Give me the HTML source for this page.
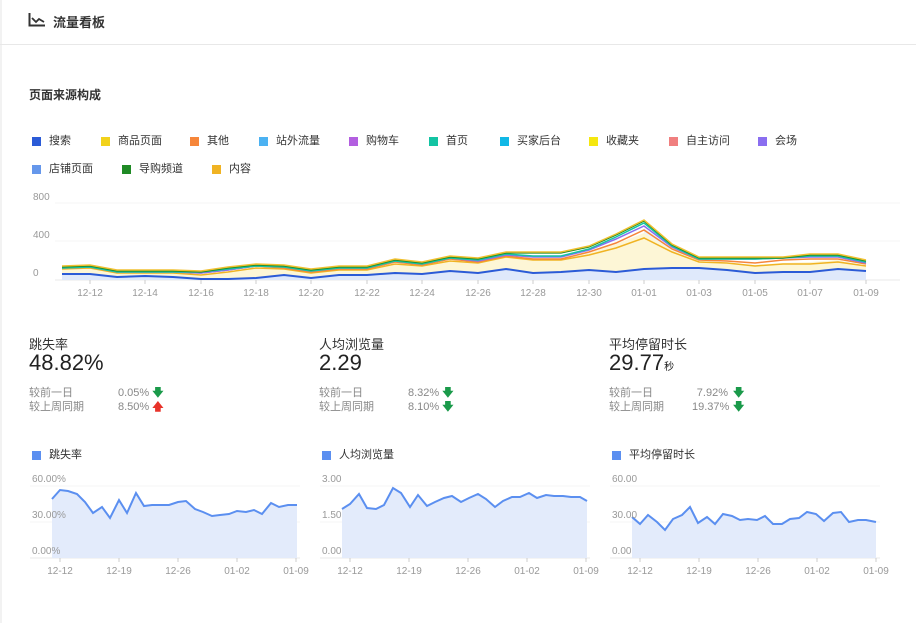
<!DOCTYPE html>
<html><head><meta charset="utf-8">
<style>
*{margin:0;padding:0;box-sizing:border-box}
body{width:916px;height:623px;background:#fff;font-family:"Liberation Sans","Noto Sans CJK SC",sans-serif;position:relative;overflow:hidden;color:#333}
.a{position:absolute;white-space:nowrap}
.hdr{position:absolute;left:0;top:0;width:916px;height:45px;border-bottom:1px solid #e8e8e8}
.lg{position:absolute;font-size:11px;color:#333;line-height:12px;white-space:nowrap;width:100px;height:14px}
.lg i{position:absolute;left:0;top:2px;width:9px;height:9px}
.lg span{position:absolute;left:17px;top:0;white-space:nowrap}
.t1{font-size:13px;color:#333}
.big{font-size:22px;color:#222}
.cmp{font-size:11px;color:#888;line-height:14px}
.ax{font-size:10px;fill:#999;font-family:"Liberation Sans",sans-serif}
</style></head><body>
<div style="position:absolute;left:0;top:0;width:2px;height:623px;background:#f2f2f2"></div>
<div class="hdr"></div>
<svg class="a" style="left:28px;top:13px" width="18" height="14" viewBox="0 0 18 14"><path d="M1.5 0V12.5H17" stroke="#333" stroke-width="2" fill="none"/><path d="M4 5L8 9L11 6L16 9" stroke="#333" stroke-width="1.8" fill="none"/></svg>
<div class="a" style="left:53px;top:12px;font-size:13px;font-weight:bold;color:#333">流量看板</div>
<div class="a" style="left:29px;top:86px;font-size:12px;font-weight:bold;color:#333">页面来源构成</div>

<div class="lg" style="left:32px;top:135px"><i style="background:#2b5bd7"></i><span>搜索</span></div>
<div class="lg" style="left:101px;top:135px"><i style="background:#f2d21b"></i><span>商品页面</span></div>
<div class="lg" style="left:190px;top:135px"><i style="background:#f6863a"></i><span>其他</span></div>
<div class="lg" style="left:259px;top:135px"><i style="background:#4cb2f2"></i><span>站外流量</span></div>
<div class="lg" style="left:349px;top:135px"><i style="background:#b35fe0"></i><span>购物车</span></div>
<div class="lg" style="left:429px;top:135px"><i style="background:#13c4a3"></i><span>首页</span></div>
<div class="lg" style="left:500px;top:135px"><i style="background:#11b8e6"></i><span>买家后台</span></div>
<div class="lg" style="left:589px;top:135px"><i style="background:#f5e70f"></i><span>收藏夹</span></div>
<div class="lg" style="left:669px;top:135px"><i style="background:#f07f7f"></i><span>自主访问</span></div>
<div class="lg" style="left:758px;top:135px"><i style="background:#8a6ef0"></i><span>会场</span></div>
<div class="lg" style="left:32px;top:163px"><i style="background:#6597eb"></i><span>店铺页面</span></div>
<div class="lg" style="left:122px;top:163px"><i style="background:#1f8a25"></i><span>导购频道</span></div>
<div class="lg" style="left:212px;top:163px"><i style="background:#f0b323"></i><span>内容</span></div>

<svg class="a" style="left:0;top:185px" width="916" height="120" viewBox="0 185 916 120">
<line x1="55" y1="203" x2="900" y2="203" stroke="#f4f4f4"/>
<line x1="55" y1="241" x2="900" y2="241" stroke="#f4f4f4"/>
<line x1="55" y1="280" x2="900" y2="280" stroke="#e8e8e8"/>
<text class="ax" x="33" y="200">800</text><text class="ax" x="33" y="238">400</text><text class="ax" x="33" y="276">0</text>
<polygon fill="#fdf6d6" points="62,280 62,269 90,268 117,273 145,273 173,273 201,275 228,272 256,268 284,269 311,273 339,270 367,270 395,264 422,266 450,261 478,263 506,257 533,258 561,258 589,253 616,244 644,233 672,250 699,261 727,263 755,265 783,263 810,262 838,260 866,266 866,280"/>
<polygon fill="#dfe9fb" points="62,280 62,274 90,274 117,277 145,276 173,277 201,279 228,279 256,278 284,275 311,278 339,275 367,275 395,273 422,274 450,271 478,273 506,269 533,273 561,272 589,270 616,272 644,269 672,268 699,268 727,270 755,273 783,272 810,272 838,269 866,271 866,280"/>
<polygon fill="#e6f0fb" opacity=".8" points="644,233 644,228 672,247 699,259 699,261 672,250"/>
<polyline fill="none" stroke="#f0b323" stroke-width="1.5" points="62,269 90,268 117,273 145,273 173,273 201,275 228,272 256,268 284,269 311,273 339,270 367,270 395,264 422,266 450,261 478,263 506,257 533,260 561,260 589,255 616,248 644,238 672,252 699,262 727,263 755,266 783,264 810,264 838,262 866,266"/>
<polyline fill="none" stroke="#f6863a" stroke-width="1.5" points="62,268 90,267 117,272 145,272 173,272 201,273 228,270 256,266 284,268 311,272 339,269 367,269 395,262 422,265 450,259 478,262 506,256 533,259 561,259 589,252 616,243 644,230 672,249 699,260 727,261 755,263 783,260 810,259 838,259 866,264"/>
<polyline fill="none" stroke="#8a6ef0" stroke-width="1.5" points="62,268 90,267 117,272 145,272 173,272 201,273 228,270 256,266 284,267 311,271 339,268 367,268 395,261 422,264 450,258 478,261 506,255 533,257 561,257 589,250 616,239 644,226 672,247 699,259 727,259 755,259 783,258 810,257 838,257 866,263"/>
<polyline fill="none" stroke="#13c4a3" stroke-width="1.5" points="62,268 90,267 117,272 145,272 173,272 201,272 228,269 256,266 284,267 311,271 339,268 367,268 395,261 422,264 450,258 478,260 506,254 533,256 561,256 589,249 616,237 644,223 672,246 699,259 727,259 755,259 783,258 810,256 838,256 866,262"/>
<polyline fill="none" stroke="#1f8a25" stroke-width="1.3" points="62,267 90,266 117,271 145,271 173,271 201,272 228,268 256,265 284,266 311,270 339,267 367,267 395,260 422,263 450,257 478,259 506,253 533,253 561,253 589,247 616,235 644,221 672,245 699,258 727,258 755,258 783,258 810,255 838,255 866,261"/>
<polyline fill="none" stroke="#f0c030" stroke-width="1.5" points="62,266 90,265 117,270 145,270 173,270 201,271 228,267 256,264 284,265 311,269 339,266 367,266 395,259 422,262 450,256 478,258 506,252 533,252 561,252 589,246 616,234 644,220 672,244 699,257 727,257 755,257 783,257 810,254 838,254 866,260"/>
<polyline fill="none" stroke="#2b5bd7" stroke-width="2" points="62,274 90,274 117,277 145,276 173,277 201,279 228,279 256,278 284,275 311,278 339,275 367,275 395,273 422,274 450,271 478,273 506,269 533,273 561,272 589,270 616,272 644,269 672,268 699,268 727,270 755,273 783,272 810,272 838,269 866,271"/>
<g stroke="#ccc"><line x1="90" y1="280" x2="90" y2="284"/><line x1="145" y1="280" x2="145" y2="284"/><line x1="201" y1="280" x2="201" y2="284"/><line x1="256" y1="280" x2="256" y2="284"/><line x1="311" y1="280" x2="311" y2="284"/><line x1="367" y1="280" x2="367" y2="284"/><line x1="422" y1="280" x2="422" y2="284"/><line x1="478" y1="280" x2="478" y2="284"/><line x1="533" y1="280" x2="533" y2="284"/><line x1="589" y1="280" x2="589" y2="284"/><line x1="644" y1="280" x2="644" y2="284"/><line x1="699" y1="280" x2="699" y2="284"/><line x1="755" y1="280" x2="755" y2="284"/><line x1="810" y1="280" x2="810" y2="284"/><line x1="866" y1="280" x2="866" y2="284"/></g>
<g class="ax" text-anchor="middle"><text x="90" y="296">12-12</text><text x="145" y="296">12-14</text><text x="201" y="296">12-16</text><text x="256" y="296">12-18</text><text x="311" y="296">12-20</text><text x="367" y="296">12-22</text><text x="422" y="296">12-24</text><text x="478" y="296">12-26</text><text x="533" y="296">12-28</text><text x="589" y="296">12-30</text><text x="644" y="296">01-01</text><text x="699" y="296">01-03</text><text x="755" y="296">01-05</text><text x="810" y="296">01-07</text><text x="866" y="296">01-09</text></g>
</svg>

<div class="a t1" style="left:29px;top:334px">跳失率</div>
<div class="a big" style="left:29px;top:350px">48.82%</div>
<div class="a cmp" style="left:29px;top:386px">较前一日<br>较上周同期</div>
<div class="a cmp" style="left:118px;top:386px">0.05% <b style="color:#1a9a4a">🡇</b><br>8.50% <b style="color:#e8332a">🡅</b></div>

<div class="a t1" style="left:319px;top:334px">人均浏览量</div>
<div class="a big" style="left:319px;top:350px">2.29</div>
<div class="a cmp" style="left:319px;top:386px">较前一日<br>较上周同期</div>
<div class="a cmp" style="left:408px;top:386px">8.32% <b style="color:#1a9a4a">🡇</b><br>8.10% <b style="color:#1a9a4a">🡇</b></div>

<div class="a t1" style="left:609px;top:334px">平均停留时长</div>
<div class="a big" style="left:609px;top:350px">29.77<span style="font-size:10px">秒</span></div>
<div class="a cmp" style="left:609px;top:386px">较前一日<br>较上周同期</div>
<div class="a cmp" style="left:692px;top:386px;text-align:right;width:36px">7.92%<br>19.37%</div>
<div class="a cmp" style="left:733px;top:386px"><b style="color:#1a9a4a">🡇</b><br><b style="color:#1a9a4a">🡇</b></div>

<div class="lg" style="left:32px;top:449px"><i style="background:#5b8ff0"></i><span>跳失率</span></div>
<div class="lg" style="left:322px;top:449px"><i style="background:#5b8ff0"></i><span>人均浏览量</span></div>
<div class="lg" style="left:612px;top:449px"><i style="background:#5b8ff0"></i><span>平均停留时长</span></div>

<svg class="a" style="left:0;top:468px" width="916" height="115" viewBox="0 468 916 115">
<g stroke="#f4f4f4"><line x1="30" y1="486" x2="300" y2="486"/><line x1="30" y1="522" x2="300" y2="522"/><line x1="320" y1="486" x2="590" y2="486"/><line x1="320" y1="522" x2="590" y2="522"/><line x1="610" y1="486" x2="880" y2="486"/><line x1="610" y1="522" x2="880" y2="522"/></g>
<g stroke="#e8e8e8"><line x1="30" y1="558" x2="300" y2="558"/><line x1="320" y1="558" x2="590" y2="558"/><line x1="610" y1="558" x2="880" y2="558"/></g>
<path fill="#e3ebfb" stroke="none" d="M52,558 L52,499 60,490 68,491 77,494 85,502 93,513 102,507 110,518 119,500 127,513 136,493 144,506 152,505 161,505 169,505 178,502 186,501 195,509 203,512 212,516 220,515 229,514 237,511 246,512 254,510 262,514 271,503 279,507 288,505 297,505 L297,558Z"/>
<polyline fill="none" stroke="#5b8ff0" stroke-width="2" points="52,499 60,490 68,491 77,494 85,502 93,513 102,507 110,518 119,500 127,513 136,493 144,506 152,505 161,505 169,505 178,502 186,501 195,509 203,512 212,516 220,515 229,514 237,511 246,512 254,510 262,514 271,503 279,507 288,505 297,505"/>
<path fill="#e3ebfb" d="M342,558 L342,509 350,504 359,494 367,508 376,509 384,505 393,488 401,493 410,507 418,495 427,506 435,502 444,498 452,496 461,502 469,498 478,494 486,499 495,507 503,501 512,497 520,497 529,493 537,498 546,495 554,496 563,496 571,497 580,497 587,501 L587,558Z"/>
<polyline fill="none" stroke="#5b8ff0" stroke-width="2" points="342,509 350,504 359,494 367,508 376,509 384,505 393,488 401,493 410,507 418,495 427,506 435,502 444,498 452,496 461,502 469,498 478,494 486,499 495,507 503,501 512,497 520,497 529,493 537,498 546,495 554,496 563,496 571,497 580,497 587,501"/>
<path fill="#e3ebfb" d="M632,558 L632,517 640,524 648,515 657,522 665,530 673,519 682,515 690,507 698,523 707,517 715,524 723,514 732,516 740,520 748,519 757,520 765,516 773,524 782,524 790,519 799,518 807,512 816,514 824,521 833,513 841,512 849,522 858,520 866,520 876,522 L876,558Z"/>
<polyline fill="none" stroke="#5b8ff0" stroke-width="2" points="632,517 640,524 648,515 657,522 665,530 673,519 682,515 690,507 698,523 707,517 715,524 723,514 732,516 740,520 748,519 757,520 765,516 773,524 782,524 790,519 799,518 807,512 816,514 824,521 833,513 841,512 849,522 858,520 866,520 876,522"/>
<g class="ax"><text x="32" y="482">60.00%</text><text x="32" y="518">30.00%</text><text x="32" y="554">0.00%</text>
<text x="322" y="482">3.00</text><text x="322" y="518">1.50</text><text x="322" y="554">0.00</text>
<text x="612" y="482">60.00</text><text x="612" y="518">30.00</text><text x="612" y="554">0.00</text></g>
<g stroke="#ccc"><line x1="60" y1="558" x2="60" y2="562"/><line x1="119" y1="558" x2="119" y2="562"/><line x1="178" y1="558" x2="178" y2="562"/><line x1="237" y1="558" x2="237" y2="562"/><line x1="296" y1="558" x2="296" y2="562"/>
<line x1="350" y1="558" x2="350" y2="562"/><line x1="409" y1="558" x2="409" y2="562"/><line x1="468" y1="558" x2="468" y2="562"/><line x1="527" y1="558" x2="527" y2="562"/><line x1="586" y1="558" x2="586" y2="562"/>
<line x1="640" y1="558" x2="640" y2="562"/><line x1="699" y1="558" x2="699" y2="562"/><line x1="758" y1="558" x2="758" y2="562"/><line x1="817" y1="558" x2="817" y2="562"/><line x1="876" y1="558" x2="876" y2="562"/></g>
<g class="ax" text-anchor="middle"><text x="60" y="574">12-12</text><text x="119" y="574">12-19</text><text x="178" y="574">12-26</text><text x="237" y="574">01-02</text><text x="296" y="574">01-09</text>
<text x="350" y="574">12-12</text><text x="409" y="574">12-19</text><text x="468" y="574">12-26</text><text x="527" y="574">01-02</text><text x="586" y="574">01-09</text>
<text x="640" y="574">12-12</text><text x="699" y="574">12-19</text><text x="758" y="574">12-26</text><text x="817" y="574">01-02</text><text x="876" y="574">01-09</text></g>
</svg>
</body></html>
